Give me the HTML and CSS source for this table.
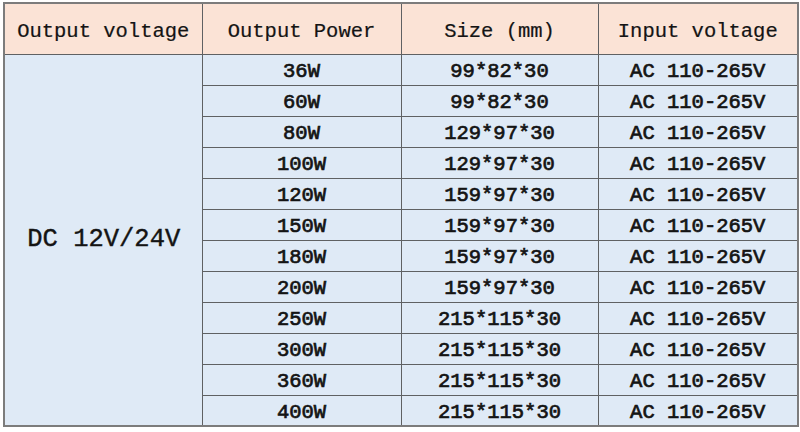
FILE: index.html
```html
<!DOCTYPE html>
<html>
<head>
<meta charset="utf-8">
<link rel="stylesheet" href="styles.css">
</head>
<body>
<div class="wrap">
<table class="spec">
  <colgroup>
    <col class="c1"><col class="c2"><col class="c3"><col class="c4">
  </colgroup>
  <thead>
    <tr class="head">
      <th>Output voltage</th>
      <th>Output Power</th>
      <th>Size (mm)</th>
      <th>Input voltage</th>
    </tr>
  </thead>
  <tbody>
    <tr><td class="dc" rowspan="12">DC 12V/24V</td><td>36W</td><td>99*82*30</td><td>AC 110-265V</td></tr>
    <tr><td>60W</td><td>99*82*30</td><td>AC 110-265V</td></tr>
    <tr><td>80W</td><td>129*97*30</td><td>AC 110-265V</td></tr>
    <tr><td>100W</td><td>129*97*30</td><td>AC 110-265V</td></tr>
    <tr><td>120W</td><td>159*97*30</td><td>AC 110-265V</td></tr>
    <tr><td>150W</td><td>159*97*30</td><td>AC 110-265V</td></tr>
    <tr><td>180W</td><td>159*97*30</td><td>AC 110-265V</td></tr>
    <tr><td>200W</td><td>159*97*30</td><td>AC 110-265V</td></tr>
    <tr><td>250W</td><td>215*115*30</td><td>AC 110-265V</td></tr>
    <tr><td>300W</td><td>215*115*30</td><td>AC 110-265V</td></tr>
    <tr><td>360W</td><td>215*115*30</td><td>AC 110-265V</td></tr>
    <tr><td>400W</td><td>215*115*30</td><td>AC 110-265V</td></tr>
  </tbody>
</table>
</div>
</body>
</html>
```

FILE: styles.css
```css
html, body {
  margin: 0;
  padding: 0;
  background: #ffffff;
}
.wrap {
  padding: 2px 3px 0 3px;
}
.spec {
  width: 794px;
  border-collapse: collapse;
  table-layout: fixed;
  font-family: "Liberation Mono", "DejaVu Sans Mono", monospace;
  font-size: 20.5px;
  color: #141414;
  border: 2px solid #7c7c7c;
}
.c1 { width: 198px; }
.c2 { width: 199px; }
.c3 { width: 197px; }
.c4 { width: 200px; }
.spec th, .spec td {
  border: 1px solid #5f6163;
  padding: 0;
  text-align: center;
  vertical-align: middle;
  white-space: nowrap;
}
.spec th {
  height: 51px;
  background: #fbe3d6;
  font-weight: normal;
  padding-top: 6px;
  box-sizing: border-box;
  -webkit-text-stroke: 0.2px #141414;
}
.spec td {
  height: 31px;
  background: #dfeaf6;
  font-weight: normal;
  padding-top: 4px;
  box-sizing: border-box;
  -webkit-text-stroke: 0.7px #141414;
}
.spec td.dc {
  font-size: 25.5px;
  padding-top: 0;
  padding-left: 1px;
  -webkit-text-stroke: 0.4px #141414;
}
```
